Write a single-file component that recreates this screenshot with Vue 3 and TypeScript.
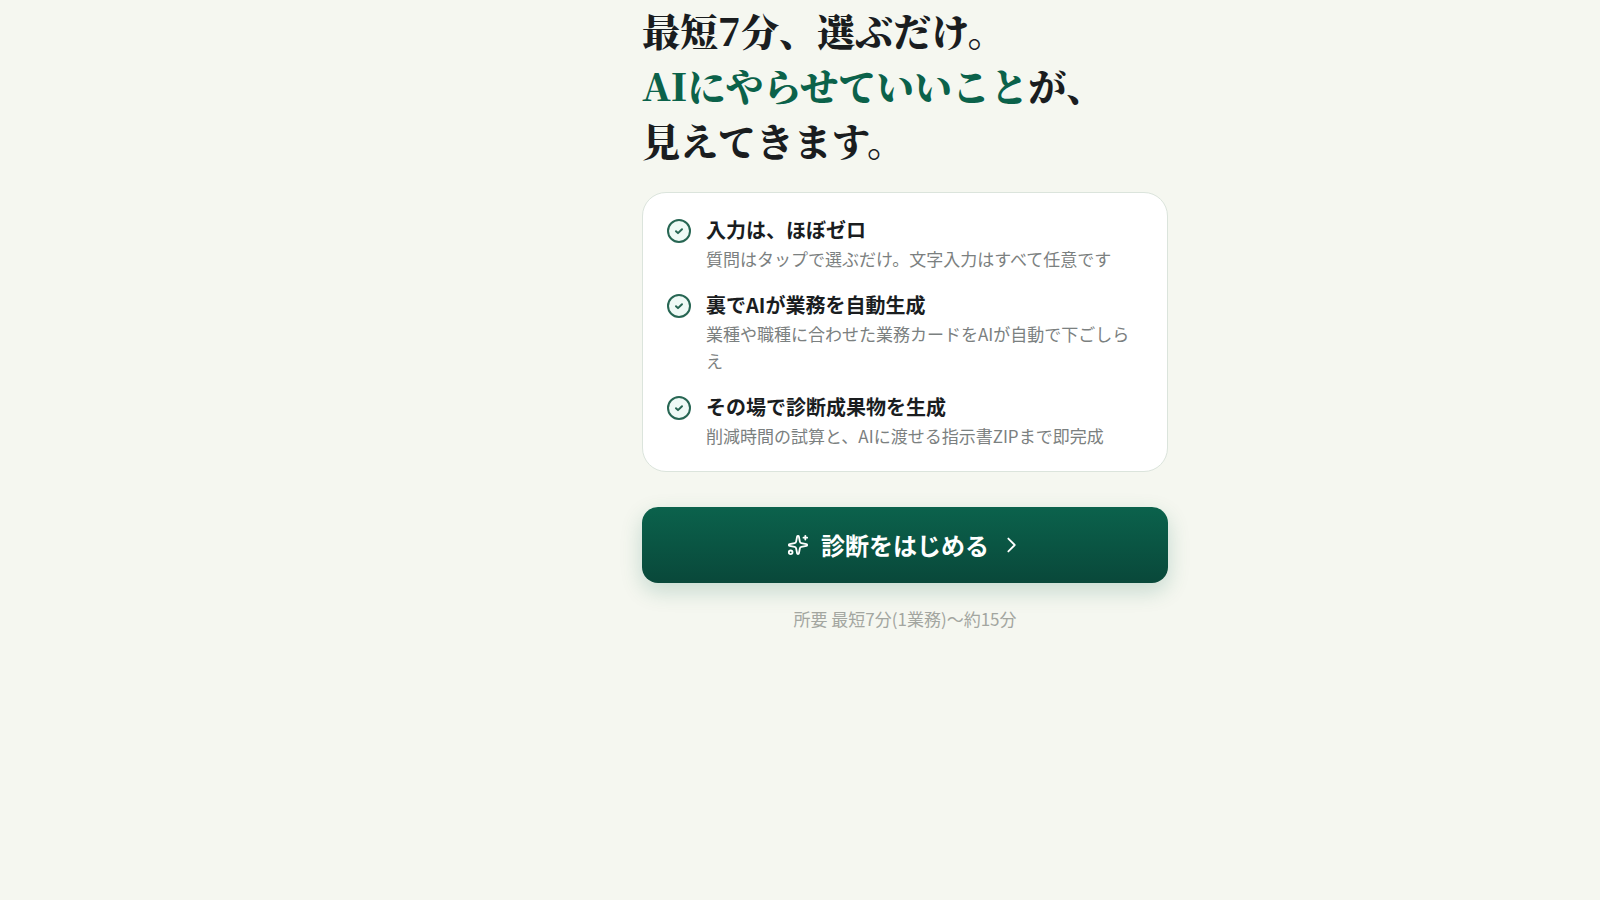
<script setup lang="ts">
interface Feature {
  title: string
  detail: string
}

const features: Feature[] = [
  { title: '入力は、ほぼゼロ', detail: '質問はタップで選ぶだけ。文字入力はすべて任意です' },
  { title: '裏でAIが業務を自動生成', detail: '業種や職種に合わせた業務カードをAIが自動で下ごしらえ' },
  { title: 'その場で診断成果物を生成', detail: '削減時間の試算と、AIに渡せる指示書ZIPまで即完成' },
]
</script>

<template>
  <main class="page">
    <section class="intro">
      <h1 class="headline">
        最短7分、選ぶだけ。<br />
        <em>AIにやらせていいこと</em>が、<br />
        見えてきます。
      </h1>

      <ul class="features">
        <li v-for="feature in features" :key="feature.title" class="feature">
          <svg class="check" viewBox="0 0 24 24" aria-hidden="true">
            <circle cx="12" cy="12" r="11" />
            <path d="m9 12.200 2 1.900 4-3.800" />
          </svg>
          <div class="copy">
            <h2>{{ feature.title }}</h2>
            <p>{{ feature.detail }}</p>
          </div>
        </li>
      </ul>

      <button class="start" type="button">
        <svg class="sparkles" viewBox="0 0 24 24" aria-hidden="true">
          <path d="M11.017 2.814a1 1 0 0 1 1.966 0l1.051 5.558a2 2 0 0 0 1.594 1.594l5.558 1.051a1 1 0 0 1 0 1.966l-5.558 1.051a2 2 0 0 0-1.594 1.594l-1.051 5.558a1 1 0 0 1-1.966 0l-1.051-5.558a2 2 0 0 0-1.594-1.594l-5.558-1.051a1 1 0 0 1 0-1.966l5.558-1.051a2 2 0 0 0 1.594-1.594z" />
          <path d="M20 2v4M22 4h-4" />
          <circle cx="4" cy="20" r="2" />
        </svg>
        <span>診断をはじめる</span>
        <svg class="chevron" viewBox="0 0 24 24" aria-hidden="true">
          <path d="m8 19 7-7-7-7" />
        </svg>
      </button>

      <p class="duration">所要 最短7分(1業務)〜約15分</p>
    </section>
  </main>
</template>

<style>
body {
  margin: 0;
  background: #f5f7f0;
}
</style>

<style scoped>
.page {
  box-sizing: border-box;
  min-height: 100vh;
  padding-left: 210px;
  background: #f5f7f0;
  color: #1a1d1f;
  font-family: "Noto Sans CJK JP", "Noto Sans", sans-serif;
}

.intro {
  max-width: 526px;
  margin: 0 auto;
  padding-top: 2px;
}

.headline {
  margin: 0 0 25px;
  font-family: "Noto Serif CJK JP", "Noto Serif JP", "Liberation Serif", "Noto Sans CJK JP", serif;
  font-size: 38px;
  font-weight: 900;
  line-height: 55px;
}

.headline em {
  color: #0b624a;
  font-style: normal;
}

.features {
  display: flex;
  flex-direction: column;
  gap: 17px;
  margin: 0;
  padding: 22px 24px;
  border: 1px solid #dbe4dc;
  border-radius: 24px;
  background: #fff;
  list-style: none;
}

.feature {
  display: flex;
  align-items: flex-start;
  gap: 15px;
}

.check {
  flex: none;
  width: 24px;
  height: 24px;
  margin-top: 4px;
  fill: #effaf6;
  stroke: #276653;
  stroke-width: 2;
  stroke-linecap: round;
  stroke-linejoin: round;
}

.check path {
  fill: none;
}

.copy h2 {
  margin: 0 0 1px;
  font-size: 20px;
  font-weight: 700;
  line-height: 29px;
}

.copy p {
  margin: 0;
  color: #7b8080;
  font-size: 17px;
  line-height: 27px;
}

.feature + .feature {
  margin-top: 1px;
}

.start {
  display: flex;
  align-items: center;
  justify-content: center;
  gap: 12px;
  width: 100%;
  margin: 35px 0 0;
  padding: 20px;
  border: 0;
  border-radius: 16px;
  background: linear-gradient(#0b624c, #09483a);
  box-shadow: 0 8px 22px rgb(11 98 74 / 20%);
  color: #fff;
  font: inherit;
  font-size: 24px;
  font-weight: 700;
  line-height: 36px;
  cursor: pointer;
}

.start svg {
  width: 22px;
  height: 22px;
  fill: none;
  stroke: currentColor;
  stroke-width: 2;
  stroke-linecap: round;
  stroke-linejoin: round;
}

.duration {
  margin: 22px 0 0;
  color: #a3a6a0;
  font-size: 17px;
  line-height: 27px;
  text-align: center;
}
</style>
